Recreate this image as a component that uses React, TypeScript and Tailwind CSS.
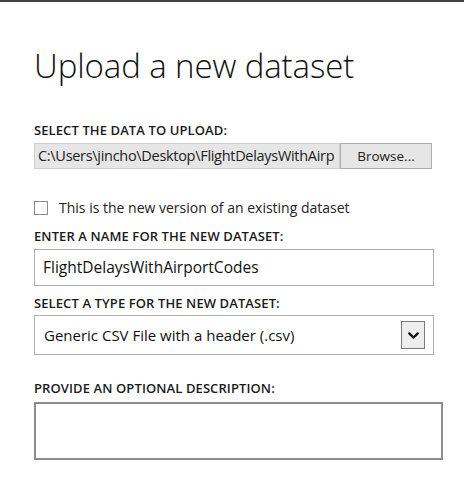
import { ChevronDown } from "lucide-react";

const font = { fontFamily: '"Open Sans", "Noto Sans", sans-serif' };

function Label({ children, className = "" }: { children: React.ReactNode; className?: string }) {
  return (
    <div className={`text-[13px] font-semibold leading-[16px] tracking-[0.1px] text-[#1a1a1a] ${className}`}>{children}</div>
  );
}

export default function App() {
  return (
    <div className="w-[464px] h-[481px] bg-white overflow-hidden text-[#222]" style={font}>
      <div className="h-[2px] bg-[#404040]" />
      <div className="pl-[34px]">
        <h1 className="mt-[44px] text-[33px] font-light leading-[40px] text-[#111] tracking-[-0.1px]">
          Upload a new dataset
        </h1>

        <Label className="mt-[36px]">SELECT THE DATA TO UPLOAD:</Label>
        <div className="mt-[5px] flex h-[26px] w-[398px]">
          <div className="flex-1 min-w-0 overflow-hidden whitespace-nowrap border border-[#cfcfcf] bg-[#e6e6e6] pl-[3px] text-[14.5px] leading-[24px] tracking-[-0.3px] text-[#222]">
            C:\Users\jincho\Desktop\FlightDelaysWithAirp
          </div>
          <button className="w-[92px] shrink-0 border border-[#adadad] bg-[#e6e6e6] text-[13.5px] leading-[24px] text-[#222]">
            Browse...
          </button>
        </div>

        <label className="mt-[30px] flex items-center gap-[11px]">
          <span className="h-[14px] w-[14px] border border-[#8a8a8a] bg-white" />
          <span className="text-[14px] leading-[18px] text-[#222]">This is the new version of an existing dataset</span>
        </label>

        <Label className="mt-[11px]">ENTER A NAME FOR THE NEW DATASET:</Label>
        <div className="mt-[5px] h-[37px] w-[400px] border border-[#acacac] pl-[8px] text-[15.5px] leading-[35px] text-[#111]">
          FlightDelaysWithAirportCodes
        </div>

        <Label className="mt-[9px]">SELECT A TYPE FOR THE NEW DATASET:</Label>
        <div className="mt-[4px] flex h-[40px] w-[400px] items-center justify-between border border-[#acacac] pl-[9px] pr-[8px]">
          <span className="text-[15px] text-[#111]">Generic CSV File with a header (.csv)</span>
          <span className="flex h-[28px] w-[24px] items-center justify-center border border-[#7a7a7a] bg-[#ededed]">
            <ChevronDown size={17} strokeWidth={3.2} className="text-[#111]" />
          </span>
        </div>

        <Label className="mt-[25px]">PROVIDE AN OPTIONAL DESCRIPTION:</Label>
        <div className="mt-[6px] h-[58px] w-[409px] border-2 border-[#8c8c8c]" />
      </div>
    </div>
  );
}
